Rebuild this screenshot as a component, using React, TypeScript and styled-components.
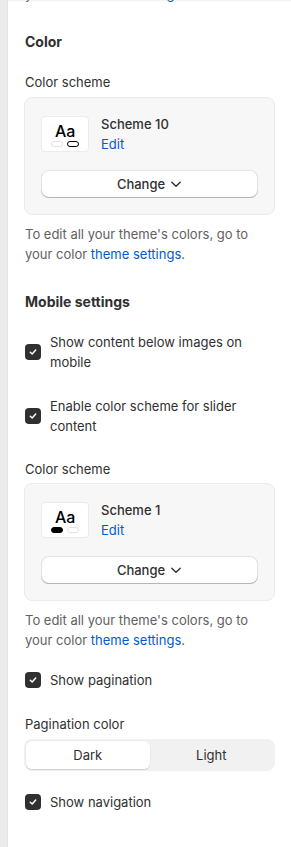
import * as React from "react";
import styled, { createGlobalStyle } from "styled-components";

const GlobalStyle = createGlobalStyle`
  html, body {
    margin: 0;
    padding: 0;
    background: #ffffff;
  }
  body {
    font-family: Inter, "Noto Sans", "Liberation Sans", sans-serif;
    font-size: 13px;
    line-height: 20px;
    color: #303030;
    -webkit-font-smoothing: antialiased;
  }
`;

const Shell = styled.div`
  display: flex;
  min-height: 847px;
  overflow: hidden;
`;

const Rail = styled.div`
  width: 7px;
  flex-shrink: 0;
  background: #ebebeb;
  border-right: 1px solid #e3e3e3;
`;

const Panel = styled.div`
  flex: 1;
  position: relative;
  padding: 0 16px;

  &::before {
    content: "";
    position: absolute;
    top: 0;
    left: 0;
    right: 0;
    height: 2px;
    background: linear-gradient(rgba(0, 0, 0, 0.06), rgba(0, 0, 0, 0));
    z-index: 1;
  }
`;

const Column = styled.div`
  display: flex;
  flex-direction: column;
`;

const Spacer = styled.div<{ $h: number }>`
  height: ${(p) => p.$h}px;
  flex-shrink: 0;
`;

const Heading = styled.h2`
  margin: 0;
  font-size: 14px;
  font-weight: 650;
  line-height: 20px;
  color: #303030;
  padding-left: 1px;
`;

const Label = styled.div`
  font-size: 13px;
  line-height: 20px;
  color: #303030;
  padding-left: 1px;
`;

const Help = styled.p`
  margin: 0;
  font-size: 13px;
  line-height: 20px;
  color: #616161;
  padding-left: 1px;
`;

const CutHelp = styled(Help)`
  margin-top: -16px;
`;

const Link = styled.a`
  color: #005bd3;
  text-decoration: none;
`;

const Card = styled.div`
  background: #f7f7f7;
  border: 1px solid #ebebeb;
  border-radius: 8px;
  padding: 16px;
  display: flex;
  flex-direction: column;
  gap: 16px;
`;

const SchemeRow = styled.div`
  display: flex;
  align-items: center;
  gap: 12px;
  height: 40px;
`;

const Swatch = styled.div`
  width: 46px;
  height: 34px;
  background: #ffffff;
  border: 1px solid #ebebeb;
  border-radius: 4px;
  display: flex;
  flex-direction: column;
  align-items: center;
  justify-content: center;
  gap: 1px;
`;

const SwatchText = styled.span`
  font-size: 16px;
  line-height: 18px;
  color: #000000;
  font-weight: 450;
  letter-spacing: -0.2px;
`;

const Pills = styled.div`
  display: flex;
  gap: 4px;
`;

const Pill = styled.span<{ $fill: string; $line: string }>`
  width: 12px;
  height: 6px;
  box-sizing: border-box;
  border-radius: 4px;
  background: ${(p) => p.$fill};
  border: 1px solid ${(p) => p.$line};
`;

const SchemeInfo = styled.div`
  display: flex;
  flex-direction: column;
`;

const SchemeName = styled.span`
  font-size: 13px;
  line-height: 20px;
  font-weight: 500;
  color: #303030;
`;

const ChangeButton = styled.button`
  height: 28px;
  width: 100%;
  display: flex;
  align-items: center;
  justify-content: center;
  gap: 5px;
  background: #ffffff;
  border: none;
  border-radius: 8px;
  box-shadow: inset 0 -1px 0 #b5b5b5, inset 0 0 0 1px #e3e3e3;
  font-family: inherit;
  font-size: 13px;
  font-weight: 500;
  color: #303030;
  padding: 0 0 1px 0;
`;

const CheckRow = styled.label`
  display: flex;
  align-items: center;
  gap: 9px;
  padding-left: 1px;
`;

const Box = styled.span`
  width: 16px;
  height: 16px;
  flex-shrink: 0;
  border-radius: 4px;
  background: #303030;
  display: flex;
  align-items: center;
  justify-content: center;
`;

const CheckText = styled.span`
  font-size: 13px;
  line-height: 20px;
  color: #303030;
`;

const Segmented = styled.div`
  display: grid;
  grid-template-columns: 1fr 1fr;
  background: #f1f1f1;
  border-radius: 8px;
  padding: 2px;
  height: 32px;
  box-sizing: border-box;
`;

const Segment = styled.div<{ $active?: boolean }>`
  display: flex;
  align-items: center;
  justify-content: center;
  border-radius: 6px;
  font-size: 13px;
  color: #303030;
  background: ${(p) => (p.$active ? "#ffffff" : "transparent")};
  box-shadow: ${(p) =>
    p.$active
      ? "0 1px 1px rgba(0,0,0,0.12), 0 0 0 0.5px rgba(0,0,0,0.04)"
      : "none"};
`;

function Chevron() {
  return (
    <svg width="12" height="12" viewBox="0 0 12 12" fill="none">
      <path
        d="M1.8 4.2 L6 8.2 L10.2 4.2"
        stroke="#303030"
        strokeWidth="1.4"
        strokeLinecap="round"
        strokeLinejoin="round"
      />
    </svg>
  );
}

function Checkbox({ label }: { label: React.ReactNode }) {
  return (
    <CheckRow>
      <Box>
        <svg width="10" height="10" viewBox="0 0 10 10" fill="none">
          <path
            d="M2.3 5.2 L4.2 7 L7.7 3"
            stroke="#ffffff"
            strokeWidth="1.5"
            strokeLinecap="round"
            strokeLinejoin="round"
          />
        </svg>
      </Box>
      <CheckText>{label}</CheckText>
    </CheckRow>
  );
}

interface SchemeCardProps {
  name: string;
  dark: "left" | "right";
}

function SchemeCard({ name, dark }: SchemeCardProps) {
  const light = { fill: "#ffffff", line: "#e3e3e3" };
  const first = dark === "left" ? { fill: "#000000", line: "#000000" } : light;
  const second =
    dark === "right" ? { fill: "#ffffff", line: "#000000" } : light;
  return (
    <Card>
      <SchemeRow>
        <Swatch>
          <SwatchText>Aa</SwatchText>
          <Pills>
            <Pill $fill={first.fill} $line={first.line} />
            <Pill $fill={second.fill} $line={second.line} />
          </Pills>
        </Swatch>
        <SchemeInfo>
          <SchemeName>{name}</SchemeName>
          <Link href="#">Edit</Link>
        </SchemeInfo>
      </SchemeRow>
      <ChangeButton>
        Change
        <Chevron />
      </ChangeButton>
    </Card>
  );
}

function ThemeHelp() {
  return (
    <Help>
      To edit all your theme's colors, go to
      <br />
      your color <Link href="#">theme settings</Link>.
    </Help>
  );
}

export default function App() {
  return (
    <>
      <GlobalStyle />
      <Shell>
        <Rail />
        <Panel>
          <Column>
            <CutHelp>
              your color <Link href="#">theme settings</Link>.
            </CutHelp>
            <Spacer $h={28} />
            <Heading>Color</Heading>
            <Spacer $h={20} />
            <Label>Color scheme</Label>
            <Spacer $h={5} />
            <SchemeCard name="Scheme 10" dark="right" />
            <Spacer $h={9} />
            <ThemeHelp />
            <Spacer $h={28} />
            <Heading>Mobile settings</Heading>
            <Spacer $h={20} />
            <Checkbox
              label={
                <>
                  Show content below images on
                  <br />
                  mobile
                </>
              }
            />
            <Spacer $h={24} />
            <Checkbox
              label={
                <>
                  Enable color scheme for slider
                  <br />
                  content
                </>
              }
            />
            <Spacer $h={23} />
            <Label>Color scheme</Label>
            <Spacer $h={4} />
            <SchemeCard name="Scheme 1" dark="left" />
            <Spacer $h={9} />
            <ThemeHelp />
            <Spacer $h={20} />
            <Checkbox label="Show pagination" />
            <Spacer $h={24} />
            <Label>Pagination color</Label>
            <Spacer $h={5} />
            <Segmented>
              <Segment $active>Dark</Segment>
              <Segment>Light</Segment>
            </Segmented>
            <Spacer $h={21} />
            <Checkbox label="Show navigation" />
          </Column>
        </Panel>
      </Shell>
    </>
  );
}
